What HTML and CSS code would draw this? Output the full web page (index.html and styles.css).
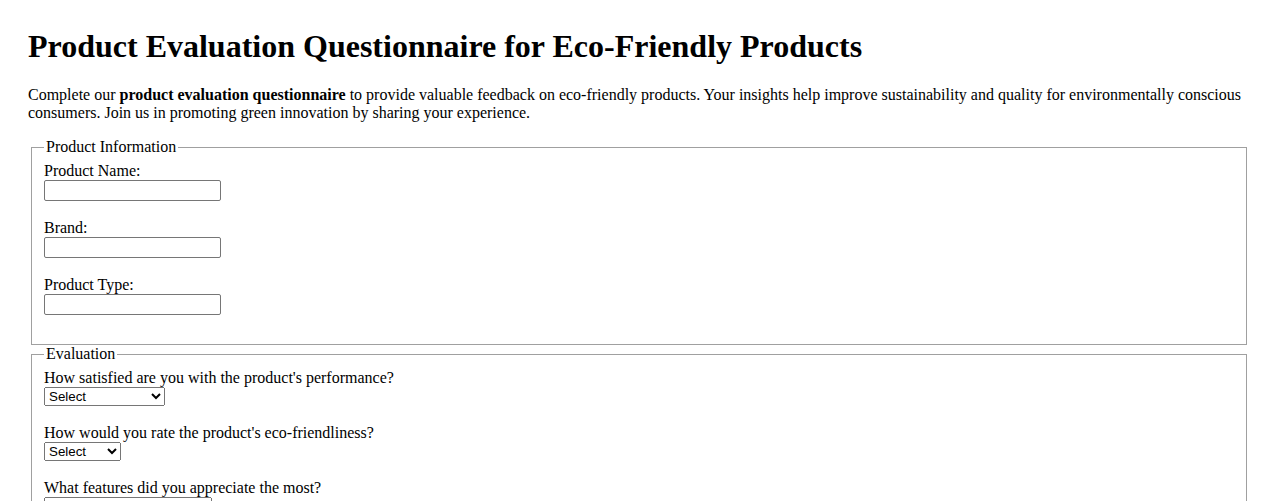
FILE: index.html
```html
<!DOCTYPE html>
<html lang="en">
<head>
<meta charset="utf-8">
<title>Product Evaluation Questionnaire</title>
<link rel="stylesheet" href="styles.css">
</head>
<body>
<h1 class="title">Product Evaluation Questionnaire for Eco-Friendly Products</h1>
<p class="intro">Complete our <strong>product evaluation questionnaire</strong> to provide valuable feedback on eco-friendly products. Your insights help improve sustainability and quality for environmentally conscious consumers. Join us in promoting green innovation by sharing your experience.</p>
<form class="form">
  <fieldset class="group">
    <legend>Product Information</legend>
    <label for="pname">Product Name:</label><br>
    <input type="text" id="pname" class="text-input"><br><br>
    <label for="brand">Brand:</label><br>
    <input type="text" id="brand" class="text-input"><br><br>
    <label for="ptype">Product Type:</label><br>
    <input type="text" id="ptype" class="text-input"><br><br>
  </fieldset>
  <fieldset class="group">
    <legend>Evaluation</legend>
    <label for="sat">How satisfied are you with the product's performance?</label><br>
    <select id="sat" class="select select-wide">
      <option>Select</option>
      <option>Very Satisfied</option>
      <option>Satisfied</option>
      <option>Neutral</option>
      <option>Dissatisfied</option>
      <option>Very Dissatisfied</option>
    </select><br><br>
    <label for="eco">How would you rate the product's eco-friendliness?</label><br>
    <select id="eco" class="select select-narrow">
      <option>Select</option>
      <option>Excellent</option>
      <option>Good</option>
      <option>Average</option>
      <option>Poor</option>
    </select><br><br>
    <label for="features">What features did you appreciate the most?</label><br>
    <textarea id="features" class="textarea" rows="4"></textarea><br><br>
  </fieldset>
</form>
</body>
</html>
```
FILE: styles.css
```css
html { background: #fff; }
body {
  margin: 0;
  padding: 7px 28px 8px;
  font-family: "Liberation Serif", "Times New Roman", serif;
  font-size: 16px;
  color: #000;
}
.title {
  font-size: 32px;
  margin: 21px 0;
}
.intro { margin: 16px 0; }
.group {
  margin: 0 3px 0 3px;
  border: 1px solid #a0a0a0;
  padding: 6px 12px 11px;
}
.group legend { padding: 0 2px; }
.text-input {
  width: 177px;
  height: 21px;
  box-sizing: border-box;
  border: 1px solid #767676;
  border-radius: 2px;
}
.select {
  font-family: "Liberation Sans", Arial, sans-serif;
  font-size: 13.33px;
  height: 19px;
  box-sizing: border-box;
}
.select-wide { width: 121px; }
.select-narrow { width: 77px; }
.textarea {
  width: 168px;
  box-sizing: border-box;
}
```
